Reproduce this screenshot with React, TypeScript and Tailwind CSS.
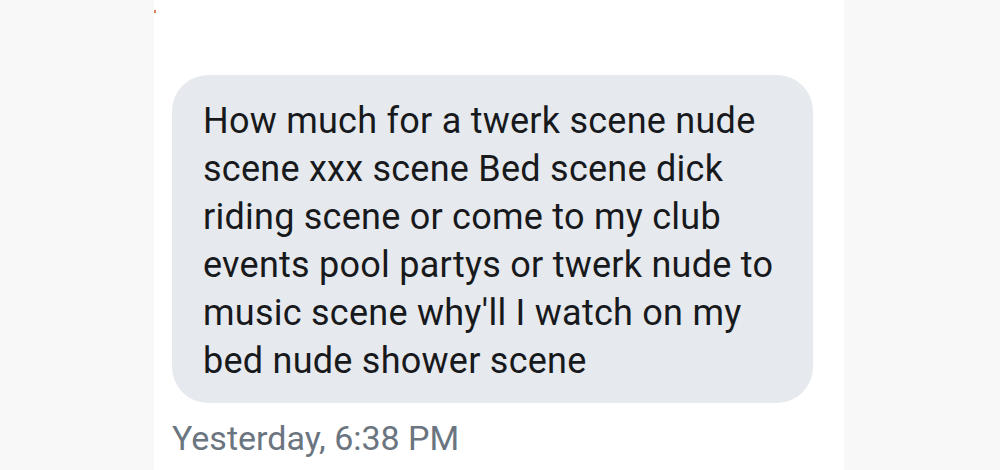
export default function App() {
  return (
    <div className="flex w-[1000px] h-[470px] overflow-hidden bg-[#f8f8f8] font-['Roboto',sans-serif]">
      <div className="w-[154px] shrink-0 relative">
        <span className="absolute left-[154px] top-[10px] w-[2px] h-[3px] bg-[#d9825b]" />
      </div>
      <div className="w-[690px] shrink-0 bg-white pl-[18px] pr-[31px] pt-[75px]">
        <div className="rounded-[36px] bg-[#e6e9ed] pl-[31px] pr-[16px] pt-[22px] pb-[18px]">
          <p className="text-[36px] leading-[48px] tracking-[0.25px] text-[#17191c]">
            How much for a twerk scene nude scene xxx scene Bed scene dick riding scene or come to my club events pool partys or twerk nude to music scene why'll I watch on my bed nude shower scene
          </p>
        </div>
        <p className="mt-[15px] text-[34px] leading-[40px] text-[#6b7580]">Yesterday, 6:38 PM</p>
      </div>
      <div className="flex-1" />
    </div>
  );
}
